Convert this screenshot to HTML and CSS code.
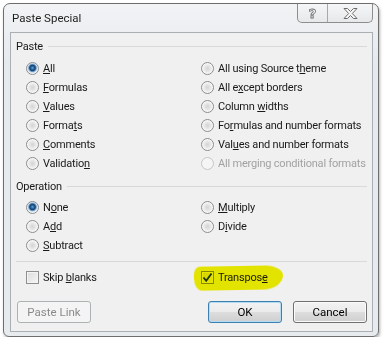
FILE: index.html
```html
<!DOCTYPE html>
<html lang="en">
<head>
    <meta charset="UTF-8">
    <title>Paste Special</title>
    <link rel="stylesheet" href="styles.css">
</head>
<body>
    <div class="window">
        <div class="titlebar">
            <span class="title">Paste Special</span>
            <div class="caption-buttons">
                <span class="cap-btn help">?</span>
                <span class="cap-btn close">
                    <svg width="15" height="11" viewBox="0 0 15 11">
                        <polygon points="1,0.5 4.5,0.5 7.5,3.5 10.5,0.5 14,0.5 9.3,5.5 14,10.5 10.5,10.5 7.5,7.5 4.5,10.5 1,10.5 5.7,5.5" fill="#f7f7f7" stroke="#6c6c6c" stroke-width="1"/>
                    </svg>
                </span>
            </div>
        </div>

        <div class="client">
            <div class="group-title">Paste</div>
            <div class="options">
                <label class="opt"><span class="radio on"></span><span><u>A</u>ll</span></label>
                <label class="opt"><span class="radio"></span><span>All using Source t<u>h</u>eme</span></label>
                <label class="opt"><span class="radio"></span><span><u>F</u>ormulas</span></label>
                <label class="opt"><span class="radio"></span><span>All e<u>x</u>cept borders</span></label>
                <label class="opt"><span class="radio"></span><span><u>V</u>alues</span></label>
                <label class="opt"><span class="radio"></span><span>Column <u>w</u>idths</span></label>
                <label class="opt"><span class="radio"></span><span>Forma<u>t</u>s</span></label>
                <label class="opt"><span class="radio"></span><span>Fo<u>r</u>mulas and number formats</span></label>
                <label class="opt"><span class="radio"></span><span><u>C</u>omments</span></label>
                <label class="opt"><span class="radio"></span><span>Val<u>u</u>es and number formats</span></label>
                <label class="opt"><span class="radio"></span><span>Validatio<u>n</u></span></label>
                <label class="opt disabled"><span class="radio"></span><span>All merging conditional formats</span></label>
            </div>

            <div class="group-title op-title">Operation</div>
            <div class="options">
                <label class="opt"><span class="radio on"></span><span>N<u>o</u>ne</span></label>
                <label class="opt"><span class="radio"></span><span><u>M</u>ultiply</span></label>
                <label class="opt"><span class="radio"></span><span>A<u>d</u>d</span></label>
                <label class="opt"><span class="radio"></span><span>D<u>i</u>vide</span></label>
                <label class="opt"><span class="radio"></span><span><u>S</u>ubtract</span></label>
            </div>

            <div class="separator"></div>

            <div class="options checks">
                <label class="opt"><span class="checkbox"></span><span>Skip <u>b</u>lanks</span></label>
                <label class="opt marked">
                    <span class="checkbox">
                        <svg width="11" height="11" viewBox="0 0 11 11">
                            <path d="M1.5 5.5 L4.2 8.8 L9.5 1.5" fill="none" stroke="#22385a" stroke-width="1.8"/>
                        </svg>
                    </span>
                    <span>Transpos<u>e</u></span>
                </label>
            </div>

            <div class="buttons">
                <button class="btn disabled">Paste Link</button>
                <span class="spacer"></span>
                <button class="btn default">OK</button>
                <button class="btn">Cancel</button>
            </div>
        </div>
    </div>
</body>
</html>
```

FILE: styles.css
```css
body {
    margin: 0;
    background: #ffffff;
    font-family: Roboto, "Noto Sans", sans-serif;
    font-size: 11px;
    letter-spacing: -0.2px;
    color: #000000;
}

.window {
    margin: 3px 0 0 3px;
    width: 376px;
    height: 334px;
    box-sizing: border-box;
    border: 1px solid #6e6e6e;
    border-radius: 7px 7px 6px 6px;
    background: linear-gradient(#f1f3f5, #e7eaed 60px, #e8ebee);
    box-shadow: 1px 2px 3px rgba(0, 0, 0, 0.3);
    display: flex;
    flex-direction: column;
}

.titlebar {
    height: 28px;
    display: flex;
    justify-content: space-between;
    align-items: flex-start;
    padding-left: 8px;
}

.title {
    margin-top: 6px;
    font-size: 11.5px;
    letter-spacing: 0;
    line-height: 16px;
    color: #1e1e1e;
}

.caption-buttons {
    display: flex;
    height: 18px;
    margin-right: 5px;
    border: 1px solid #8e8e8e;
    border-top: none;
    border-radius: 0 0 5px 5px;
    background: linear-gradient(#f5f6f7, #e6e8ea);
}

.cap-btn {
    display: flex;
    align-items: center;
    justify-content: center;
}

.help {
    width: 29px;
    border-right: 1px solid #a8a8a8;
    font-family: "DejaVu Sans", sans-serif;
    font-size: 13px;
    font-weight: bold;
    color: #f7f7f7;
    -webkit-text-stroke: 0.8px #6c6c6c;
}

.close {
    width: 44px;
}

.client {
    flex: 1;
    margin: 0 5px 4px 6px;
    padding: 0 5px 0 5px;
    border: 1px solid #a9afb5;
    background: #f0f0f0;
    display: flex;
    flex-direction: column;
}

.group-title {
    display: flex;
    align-items: center;
    gap: 5px;
    height: 16px;
    margin-top: 5px;
    color: #1a1a1a;
}

.group-title::after {
    content: "";
    flex: 1;
    height: 1px;
    background: #d9d9d9;
    margin-top: 1px;
}

.options {
    display: grid;
    grid-template-columns: 175px 1fr;
    grid-auto-rows: 19px;
    margin-top: 5px;
    padding-left: 10px;
}

.op-title + .options {
    margin-top: 4px;
}

.opt {
    position: relative;
    display: flex;
    align-items: center;
    gap: 4px;
    line-height: 15px;
    white-space: nowrap;
    color: #1a1a1a;
}

.opt u {
    text-underline-offset: 1px;
}

.opt.disabled {
    color: #a2a2a2;
}

.radio {
    width: 13px;
    height: 13px;
    box-sizing: border-box;
    border-radius: 50%;
    border: 1px solid #8d8d8d;
    background: radial-gradient(circle at 50% 50%, #d4d4d4 0, #e6e6e6 3px, #f6f6f6 5px, #fdfdfd 6px);
    flex: none;
}

.radio.on {
    background: radial-gradient(circle at 50% 45%, #6ea5d4 0, #2a69a3 1.5px, #163f6c 2.8px, #5d8fbf 3.6px, #c9dff0 4.6px, #f6f6f6 5.6px);
}

.disabled .radio {
    border-color: #c6c6c6;
    background: #f5f5f5;
}

.separator {
    height: 1px;
    margin-top: 6px;
    background: #d9d9d9;
}

.checks {
    margin-top: 6px;
}

.checkbox {
    width: 13px;
    height: 13px;
    box-sizing: border-box;
    border: 1px solid #8e8f8f;
    background: linear-gradient(135deg, #dcdcdc, #f6f6f6);
    box-shadow: inset 0 0 0 1px #f4f4f4;
    display: flex;
    align-items: center;
    justify-content: center;
    flex: none;
}

/* highlighter mark drawn over the Transpose option */
.marked::after {
    content: "";
    position: absolute;
    left: -7px;
    top: -2px;
    width: 89px;
    height: 24px;
    background: #f2f200;
    border-radius: 6px 18px 20px 8px / 8px 10px 14px 12px;
    transform: rotate(-1deg);
    mix-blend-mode: multiply;
    filter: blur(0.6px);
}

.buttons {
    display: flex;
    gap: 11px;
    margin-top: 14px;
}

.spacer {
    flex: 1;
}

.btn {
    width: 74px;
    height: 22px;
    padding: 0;
    margin: 0;
    border: 1px solid #707070;
    border-radius: 3px;
    background: linear-gradient(#f2f2f2 0, #ebebeb 50%, #dddddd 50%, #cfcfcf 100%);
    box-shadow: inset 0 0 0 1px #fbfbfb;
    font-family: inherit;
    font-size: 11.5px;
    letter-spacing: 0;
    color: #000000;
}

.btn.default {
    border-color: #3c7fb1;
    box-shadow: inset 0 0 0 1px #b3dcf3;
}

.btn.disabled {
    margin-left: 1px;
    border-color: #adb2b5;
    background: #f4f4f4;
    box-shadow: none;
    color: #8a8a8a;
}
```
